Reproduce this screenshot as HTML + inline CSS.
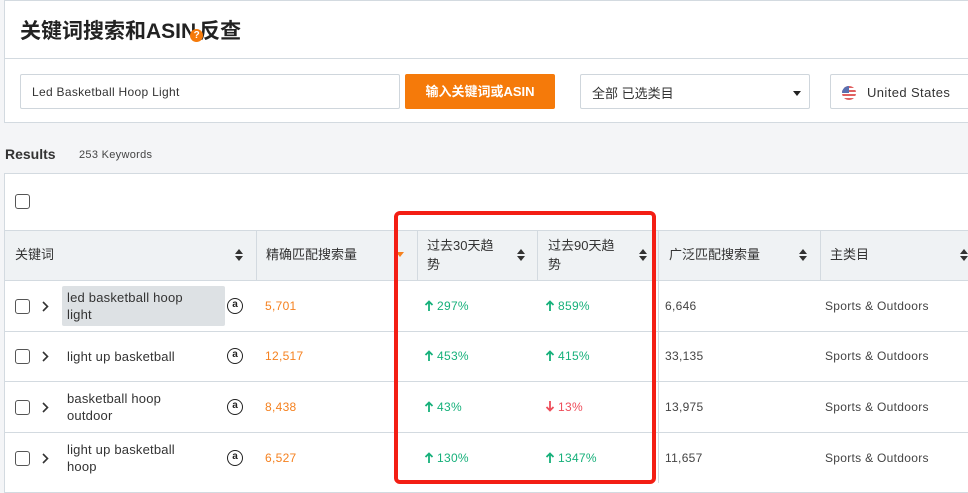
<!DOCTYPE html>
<html><head><meta charset="utf-8"><style>
*{box-sizing:border-box;margin:0;padding:0}
body{width:968px;height:486px;overflow:hidden;background:#f4f5f7;font-family:"Liberation Sans","Noto Sans CJK SC",sans-serif;color:#333;position:relative}
.abs{position:absolute}
.card{left:4px;top:0;width:980px;height:123px;background:#fff;border:1px solid #d3dae0}
.title{left:20px;top:15px;font-size:21px;font-weight:bold;color:#222}
.q{display:inline-block;width:13px;height:13px;border-radius:50%;background:#f57a0a;color:#fff;font-size:10px;line-height:13px;text-align:center;vertical-align:middle;margin-left:-6px;margin-right:-4px;position:relative;top:3px}
.sep{left:4px;top:58px;width:980px;height:1px;background:#d3dae0}
.inp{left:20px;top:74px;width:380px;height:35px;border:1px solid #cfd6dc;border-radius:2px;font-size:12px;color:#333;padding:10px 11px;background:#fff;letter-spacing:.3px}
.btn{left:405px;top:74px;width:150px;height:35px;background:#f57a0a;border-radius:2px;color:#fff;font-size:13px;font-weight:bold;text-align:center;line-height:35px}
.sel{left:580px;top:74px;width:230px;height:35px;border:1px solid #cfd6dc;border-radius:2px;background:#fff;font-size:13px;padding:8px 11px}
.sel:after{content:"";position:absolute;right:8px;top:16px;border:4px solid transparent;border-top:5px solid #222}
.cty{left:830px;top:74px;width:160px;height:35px;border:1px solid #cfd6dc;border-radius:2px;background:#fff;font-size:13px;padding:10px 0 0 36px;color:#333;letter-spacing:.4px}
.flag{left:11px;top:11px;width:14px;height:14px;border-radius:50%;background:repeating-linear-gradient(#e06060 0 2px,#fff 2px 4px);overflow:hidden}
.flag:before{content:"";position:absolute;left:0;top:0;width:7px;height:7px;background:#5a6fb0}
.res{left:5px;top:146px;font-size:14px;font-weight:bold;color:#333}
.kw{left:79px;top:149px;font-size:11px;color:#444;letter-spacing:.3px}
.tcard{left:4px;top:173px;width:980px;height:320px;background:#fff;border:1px solid #d3dae0}
.cb{width:15px;height:15px;border:1.5px solid #555;border-radius:3px;background:#fff}
.hdr{left:5px;top:230px;width:980px;height:51px;background:#eff2f4;border-top:1px solid #d3dae0;border-bottom:1px solid #d3dae0}
.vl{width:1px;background:#d3dae0}
.hl{height:1px;background:#d3dae0;left:5px;width:980px}
.h{font-size:13px;color:#333;line-height:19px}
.sort{width:8px;height:12px}
.sort:before{content:"";position:absolute;left:0;top:0;border:4px solid transparent;border-bottom:5px solid #333;border-top:0}
.sort:after{content:"";position:absolute;left:0;top:7px;border:4px solid transparent;border-top:5px solid #333;border-bottom:0}
.t{font-size:13px;color:#333;line-height:17px;letter-spacing:.2px}
.o{font-size:12px;color:#f5811f;letter-spacing:.3px}
.g{font-size:12px;color:#16b07a;letter-spacing:.3px}
.r{font-size:12px;color:#ee4d5a;letter-spacing:.3px}
.n{font-size:12px;color:#444;letter-spacing:.3px}
.am{width:16px;height:16px;border:1.5px solid #222;border-radius:50%;font-size:10px;text-align:center;line-height:12px;font-weight:bold;color:#222}
.box{left:394px;top:211px;width:262px;height:273px;border:4px solid #f31e14;border-radius:6px}
svg{position:absolute}
</style></head><body>
<div class="abs card"></div>
<div class="abs title">关键词搜索和ASIN<span class="q">?</span>反查</div>
<div class="abs sep"></div>
<div class="abs inp">Led Basketball Hoop Light</div>
<div class="abs btn">输入关键词或ASIN</div>
<div class="abs sel">全部 已选类目</div>
<div class="abs cty"><div class="abs flag"></div>United States</div>
<div class="abs res">Results</div>
<div class="abs kw">253 Keywords</div>
<div class="abs tcard"></div>
<div class="abs cb" style="left:15px;top:194px"></div>
<div class="abs hdr"></div>
<div class="abs vl" style="left:256px;top:230px;height:51px"></div>
<div class="abs vl" style="left:417px;top:230px;height:51px"></div>
<div class="abs vl" style="left:537px;top:230px;height:51px"></div>
<div class="abs vl" style="left:658px;top:230px;height:253px"></div>
<div class="abs vl" style="left:820px;top:230px;height:51px"></div>
<div class="abs h" style="left:15px;top:245px">关键词</div>
<div class="abs sort" style="left:235px;top:249px"></div>
<div class="abs h" style="left:266px;top:245px">精确匹配搜索量</div>
<div class="abs" style="left:396px;top:252px;border:4px solid transparent;border-top:5px solid #f5811f"></div>
<div class="abs h" style="left:427px;top:236px;width:80px">过去30天趋<br>势</div>
<div class="abs sort" style="left:517px;top:249px"></div>
<div class="abs h" style="left:548px;top:236px;width:80px">过去90天趋<br>势</div>
<div class="abs sort" style="left:639px;top:249px"></div>
<div class="abs h" style="left:669px;top:245px">广泛匹配搜索量</div>
<div class="abs sort" style="left:799px;top:249px"></div>
<div class="abs h" style="left:830px;top:245px">主类目</div>
<div class="abs sort" style="left:960px;top:249px"></div>

<div class="abs hl" style="top:331px"></div>
<div class="abs hl" style="top:381px"></div>
<div class="abs hl" style="top:432px"></div>

<svg width="0" height="0"><defs>
<g id="up"><path d="M5 1.5V11M1.5 5L5 1.5 8.5 5" fill="none" stroke="#16b07a" stroke-width="1.8"/></g>
<g id="dn"><path d="M5 0V9.5M1.5 6L5 9.5 8.5 6" fill="none" stroke="#ee4d5a" stroke-width="1.8"/></g>
<g id="ch"><path d="M2 1L6.5 5.5 2 10" fill="none" stroke="#333" stroke-width="1.6"/></g>
</defs></svg>

<!-- row1 -->
<div class="abs cb" style="left:15px;top:299px"></div><svg style="left:41px;top:301px" width="9" height="12"><use href="#ch"/></svg>
<div class="abs" style="left:62px;top:286px;width:163px;height:40px;background:#dde1e4;border-radius:2px"></div>
<div class="abs t" style="left:67px;top:289px">led basketball hoop<br>light</div>
<div class="abs am" style="left:227px;top:298px">a</div>
<div class="abs o" style="left:265px;top:299px">5,701</div>
<svg style="left:424px;top:300px" width="10" height="12"><use href="#up"/></svg><div class="abs g" style="left:437px;top:299px">297%</div>
<svg style="left:545px;top:300px" width="10" height="12"><use href="#up"/></svg><div class="abs g" style="left:558px;top:299px">859%</div>
<div class="abs n" style="left:665px;top:299px">6,646</div>
<div class="abs n" style="left:825px;top:299px">Sports &amp; Outdoors</div>
<!-- row2 -->
<div class="abs cb" style="left:15px;top:349px"></div><svg style="left:41px;top:351px" width="9" height="12"><use href="#ch"/></svg>
<div class="abs t" style="left:67px;top:348px">light up basketball</div>
<div class="abs am" style="left:227px;top:348px">a</div>
<div class="abs o" style="left:265px;top:349px">12,517</div>
<svg style="left:424px;top:350px" width="10" height="12"><use href="#up"/></svg><div class="abs g" style="left:437px;top:349px">453%</div>
<svg style="left:545px;top:350px" width="10" height="12"><use href="#up"/></svg><div class="abs g" style="left:558px;top:349px">415%</div>
<div class="abs n" style="left:665px;top:349px">33,135</div>
<div class="abs n" style="left:825px;top:349px">Sports &amp; Outdoors</div>
<!-- row3 -->
<div class="abs cb" style="left:15px;top:400px"></div><svg style="left:41px;top:402px" width="9" height="12"><use href="#ch"/></svg>
<div class="abs t" style="left:67px;top:390px">basketball hoop<br>outdoor</div>
<div class="abs am" style="left:227px;top:399px">a</div>
<div class="abs o" style="left:265px;top:400px">8,438</div>
<svg style="left:424px;top:401px" width="10" height="12"><use href="#up"/></svg><div class="abs g" style="left:437px;top:400px">43%</div>
<svg style="left:545px;top:401px" width="10" height="12"><use href="#dn"/></svg><div class="abs r" style="left:558px;top:400px">13%</div>
<div class="abs n" style="left:665px;top:400px">13,975</div>
<div class="abs n" style="left:825px;top:400px">Sports &amp; Outdoors</div>
<!-- row4 -->
<div class="abs cb" style="left:15px;top:451px"></div><svg style="left:41px;top:453px" width="9" height="12"><use href="#ch"/></svg>
<div class="abs t" style="left:67px;top:441px">light up basketball<br>hoop</div>
<div class="abs am" style="left:227px;top:450px">a</div>
<div class="abs o" style="left:265px;top:451px">6,527</div>
<svg style="left:424px;top:452px" width="10" height="12"><use href="#up"/></svg><div class="abs g" style="left:437px;top:451px">130%</div>
<svg style="left:545px;top:452px" width="10" height="12"><use href="#up"/></svg><div class="abs g" style="left:558px;top:451px">1347%</div>
<div class="abs n" style="left:665px;top:451px">11,657</div>
<div class="abs n" style="left:825px;top:451px">Sports &amp; Outdoors</div>

<div class="abs box"></div>
</body></html>
